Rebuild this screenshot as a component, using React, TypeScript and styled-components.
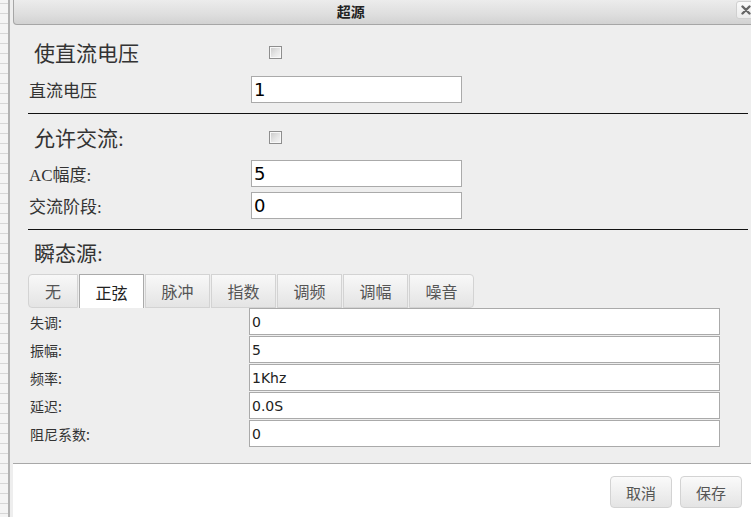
import React from "react";
import styled, { createGlobalStyle } from "styled-components";

const GlobalStyle = createGlobalStyle`
  html, body { margin: 0; padding: 0; background: #f4f4f4; overflow: hidden; }
  * { box-sizing: border-box; }
`;

const CJK = `"Noto Sans CJK SC", sans-serif`;
const SERIF_CJK = `"Liberation Serif", "Noto Sans CJK SC", serif`;

const Page = styled.div`
  display: flex;
  width: 751px;
  height: 517px;
  overflow: hidden;
`;

const Backdrop = styled.div`
  flex: none;
  width: 8px;
  height: 100%;
  background: repeating-linear-gradient(
    to bottom,
    #f4f4f4 0px,
    #f4f4f4 3px,
    #d6d6d6 3px,
    #d6d6d6 4px,
    #f4f4f4 4px,
    #f4f4f4 10px
  );
`;

const Dialog = styled.div`
  flex: none;
  width: 755px;
  height: 100%;
  display: flex;
  flex-direction: column;
  border-left: 2px solid #b2b2b2;
  background: #eeeeee;
  padding: 0 3px;
`;

const TitleBar = styled.div`
  position: relative;
  flex: none;
  height: 25px;
  padding: 0 16px;
  border: 1px solid #a6a6a6;
  border-top: none;
  border-bottom-left-radius: 4px;
  border-bottom-right-radius: 4px;
  background: linear-gradient(to bottom, #ececec 0%, #dedede 60%, #d2d2d2 100%);
`;

const Title = styled.div`
  width: 90%;
  text-align: center;
  font-family: ${CJK};
  font-weight: bold;
  font-size: 14px;
  line-height: 23px;
  color: #222;
`;

const CloseButton = styled.div`
  position: absolute;
  right: 3px;
  top: 1px;
  width: 20px;
  height: 18px;
  border: 1px solid #d0d0d0;
  border-radius: 3px;
  background: linear-gradient(to bottom, #fafafa, #ececec);
  display: flex;
  align-items: center;
  justify-content: center;
`;

const Content = styled.div`
  flex: none;
  padding: 10px 12px 16px 15px;
`;

const SectionHeading = styled.div<{ $gap: number }>`
  display: grid;
  grid-template-columns: 235px auto;
  align-items: center;
  height: 34px;
  margin-top: ${(p) => p.$gap}px;
  padding-left: 6px;
`;

const HeadingText = styled.span`
  font-family: ${SERIF_CJK};
  font-size: 21px;
  color: #333;
`;

const CheckBox = styled.input.attrs({ type: "checkbox" })`
  appearance: none;
  -webkit-appearance: none;
  margin: 0;
  width: 13px;
  height: 13px;
  border: 1px solid #8e8e8e;
  box-shadow: inset 0 0 0 1px #f8f8f8;
  background: linear-gradient(135deg, #c8c8c8 0%, #e6e6e6 55%, #f7f7f7 100%);
`;

const FieldRow = styled.div<{ $gap: number }>`
  display: grid;
  grid-template-columns: 223px 211px;
  align-items: center;
  height: 27px;
  margin-top: ${(p) => p.$gap}px;
`;

const FieldLabel = styled.span`
  font-family: ${SERIF_CJK};
  font-size: 17px;
  color: #333;
  padding-left: 1px;
`;

const BigInput = styled.input`
  width: 211px;
  height: 27px;
  margin: 0;
  border: 1px solid #aaaaaa;
  background: #fff;
  padding: 0 2px;
  font-family: "DejaVu Sans", sans-serif;
  font-size: 18px;
  color: #000;
  outline: none;
`;

const Divider = styled.div<{ $gap: number }>`
  height: 1px;
  margin-top: ${(p) => p.$gap}px;
  background: #111;
`;

const TabBar = styled.div`
  display: flex;
  gap: 1px;
  height: 34px;
  margin-top: 5px;
`;

const Tab = styled.div<{ $active?: boolean; $width: number }>`
  width: ${(p) => p.$width}px;
  height: 34px;
  display: flex;
  align-items: center;
  justify-content: center;
  font-family: ${CJK};
  font-size: 16px;
  color: ${(p) => (p.$active ? "#222" : "#555")};
  border: 1px solid ${(p) => (p.$active ? "#aaaaaa" : "#d3d3d3")};
  border-bottom: ${(p) => (p.$active ? "none" : "1px solid #d3d3d3")};
  background: ${(p) =>
    p.$active ? "#ffffff" : "linear-gradient(to bottom, #f8f8f8 0%, #ededed 55%, #e4e4e4 100%)"};
  &:first-child {
    border-radius: 4px 0 0 4px;
  }
  &:last-child {
    border-radius: 0 4px 4px 0;
  }
`;

const Panel = styled.div`
  display: flex;
  flex-direction: column;
  gap: 1px;
  padding-left: 2px;
`;

const PanelRow = styled.div`
  display: grid;
  grid-template-columns: 219px 471px;
  align-items: center;
  height: 27px;
`;

const PanelLabel = styled.span`
  font-family: ${CJK};
  font-size: 14px;
  color: #333;
`;

const PanelInput = styled.input`
  width: 471px;
  height: 27px;
  margin: 0;
  border: 1px solid #aaaaaa;
  background: #fff;
  padding: 0 2px;
  font-family: "DejaVu Sans", sans-serif;
  font-size: 14px;
  color: #222;
  outline: none;
`;

const ButtonPane = styled.div`
  flex: 1;
  display: flex;
  justify-content: flex-end;
  align-items: flex-start;
  gap: 8px;
  padding: 12px 18px 0 0;
  border-top: 1px solid #a8a8a8;
  background: #ffffff;
`;

const FooterButton = styled.button`
  width: 62px;
  height: 32px;
  margin: 0;
  border: 1px solid #d3d3d3;
  border-radius: 4px;
  background: linear-gradient(to bottom, #fafafa 0%, #eeeeee 55%, #e4e4e4 100%);
  font-family: ${CJK};
  font-size: 15px;
  color: #555;
  padding: 0;
`;

const tabs = ["无", "正弦", "脉冲", "指数", "调频", "调幅", "噪音"];

const sineFields: [string, string][] = [
  ["失调:", "0"],
  ["振幅:", "5"],
  ["频率:", "1Khz"],
  ["延迟:", "0.0S"],
  ["阻尼系数:", "0"],
];

export default function App() {
  return (
    <>
      <GlobalStyle />
      <Page>
        <Backdrop />
        <Dialog>
          <TitleBar>
            <Title>超源</Title>
            <CloseButton>
              <svg width="10" height="10" viewBox="0 0 10 10">
                <path d="M1.5 1.5 L8.5 8.5 M8.5 1.5 L1.5 8.5" stroke="#666" strokeWidth="2.4" strokeLinecap="round" />
              </svg>
            </CloseButton>
          </TitleBar>
          <Content>
            <SectionHeading $gap={0}>
              <HeadingText>使直流电压</HeadingText>
              <CheckBox readOnly />
            </SectionHeading>
            <FieldRow $gap={7}>
              <FieldLabel>直流电压</FieldLabel>
              <BigInput defaultValue="1" />
            </FieldRow>
            <Divider $gap={10} />
            <SectionHeading $gap={6}>
              <HeadingText>允许交流:</HeadingText>
              <CheckBox readOnly />
            </SectionHeading>
            <FieldRow $gap={6}>
              <FieldLabel>AC幅度:</FieldLabel>
              <BigInput defaultValue="5" />
            </FieldRow>
            <FieldRow $gap={5}>
              <FieldLabel>交流阶段:</FieldLabel>
              <BigInput defaultValue="0" />
            </FieldRow>
            <Divider $gap={10} />
            <SectionHeading $gap={5}>
              <HeadingText>瞬态源:</HeadingText>
            </SectionHeading>
            <TabBar>
              {tabs.map((t, i) => (
                <Tab key={t} $active={i === 1} $width={i === 0 ? 50 : 65}>
                  {t}
                </Tab>
              ))}
            </TabBar>
            <Panel>
              {sineFields.map(([label, value]) => (
                <PanelRow key={label}>
                  <PanelLabel>{label}</PanelLabel>
                  <PanelInput defaultValue={value} />
                </PanelRow>
              ))}
            </Panel>
          </Content>
          <ButtonPane>
            <FooterButton>取消</FooterButton>
            <FooterButton>保存</FooterButton>
          </ButtonPane>
        </Dialog>
      </Page>
    </>
  );
}
